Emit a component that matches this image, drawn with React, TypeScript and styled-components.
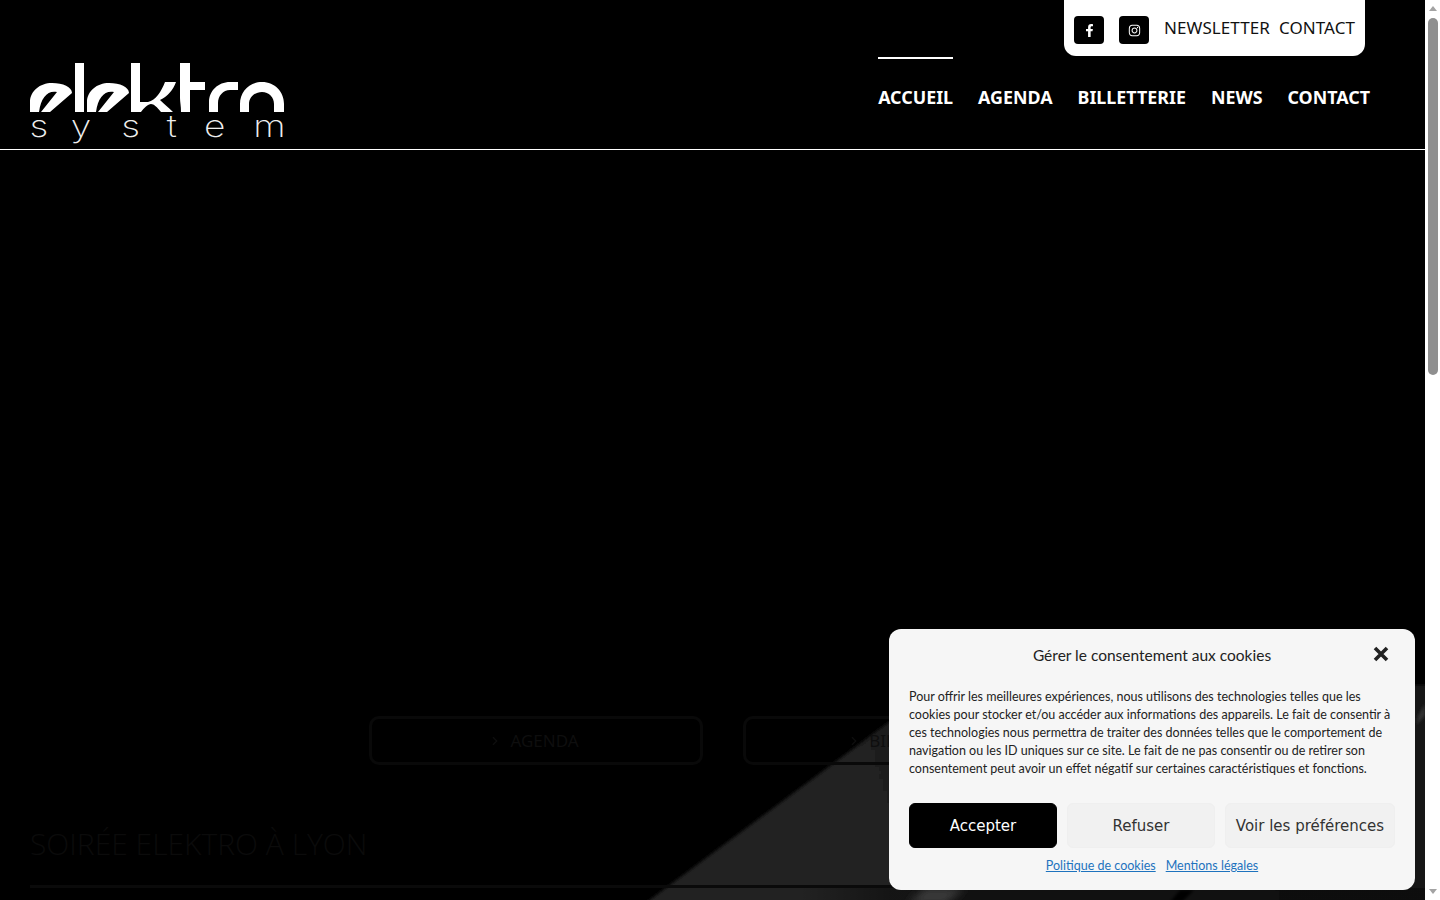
import React from 'react';
import styled, { createGlobalStyle } from 'styled-components';
import { ChevronRight } from 'lucide-react';
import { FaFacebookF, FaInstagram } from 'react-icons/fa';

const GlobalStyle = createGlobalStyle`
  html, body {
    height: 100%;
    overflow: hidden;
  }
  body {
    margin: 0;
    background: #000;
    font-family: "DejaVu Sans", sans-serif;
  }
`;

const Shell = styled.div`
  display: flex;
  height: 100vh;
  overflow: hidden;
`;

const Main = styled.main`
  flex: 1;
  min-width: 0;
  background: #000;
`;

const ScrollRail = styled.div`
  display: flex;
  flex-direction: column;
  align-items: center;
  width: 15px;
  background: #fff;
`;

const ArrowUp = styled.span`
  margin-top: 6px;
  border-left: 4px solid transparent;
  border-right: 4px solid transparent;
  border-bottom: 5px solid #a3a3a3;
`;

const ArrowDown = styled.span`
  margin-top: auto;
  margin-bottom: 6px;
  border-left: 4px solid transparent;
  border-right: 4px solid transparent;
  border-top: 5px solid #a3a3a3;
`;

const ScrollThumb = styled.div`
  width: 10px;
  height: 357px;
  margin-top: 7px;
  border-radius: 5px;
  background: #8f8f8f;
`;

const Header = styled.header`
  height: 149px;
  border-bottom: 1px solid #fff;
  display: flex;
  justify-content: space-between;
  padding: 0 55px 0 30px;
`;

const LogoBox = styled.a`
  display: block;
  width: 256px;
  padding-top: 62px;
`;

const HeaderRight = styled.div`
  display: flex;
  flex-direction: column;
  align-items: flex-end;
`;

const TopCard = styled.div`
  display: flex;
  align-items: center;
  height: 56px;
  margin-right: 5px;
  padding: 0 10px;
  background: #fff;
  border-radius: 0 0 12px 12px;
`;

const Social = styled.a`
  display: flex;
  align-items: center;
  justify-content: center;
  width: 30px;
  height: 28px;
  margin-right: 15px;
  margin-top: 4px;
  border-radius: 4px;
  background: #000;
  color: #fff;
  font-size: 13px;
`;

const TopLinks = styled.div`
  display: flex;
  gap: 9px;
`;

const TopLink = styled.a`
  color: #111;
  font-family: "Noto Sans", sans-serif;
  font-size: 17px;
  letter-spacing: 0.07px;
  line-height: 20px;
`;

const Nav = styled.nav`
  display: flex;
  gap: 25px;
`;

const NavLink = styled.a<{ $active?: boolean }>`
  display: block;
  height: 78px;
  margin-top: 1px;
  padding-top: 26px;
  box-sizing: border-box;
  border-top: 2px solid ${p => (p.$active ? '#fff' : 'transparent')};
  color: #fff;
  font-family: "Noto Sans", sans-serif;
  font-size: 17.85px;
  font-weight: 700;
  line-height: 24px;
`;

const Hero = styled.section`
  position: relative;
  height: 750px;
  padding: 566px 30px 0;
  box-sizing: border-box;
  overflow: hidden;
`;

const Sheen = styled.svg`
  position: absolute;
  top: 0;
  left: 0;
`;

const HeroContent = styled.div`
  position: relative;
`;

const ButtonRow = styled.div`
  display: flex;
  gap: 40px;
  margin-left: 339px;
`;

const GhostButton = styled.a`
  display: flex;
  align-items: center;
  justify-content: center;
  gap: 8px;
  width: 334px;
  height: 49px;
  box-sizing: border-box;
  border: 3px solid #090909;
  border-radius: 10px;
  color: #0e0e0e;
  font-family: "Noto Sans", sans-serif;
  font-size: 17px;
  line-height: 20px;
  padding: 0 5px 0 0;
`;

const Title = styled.h1`
  margin: 60px 0 0;
  padding-bottom: 22px;
  border-bottom: 3px solid #0a0a0a;
  color: #0b0b0b;
  font-family: "Open Sans", sans-serif;
  font-size: 30px;
  font-weight: 300;
  line-height: 38px;
`;

const CookieBanner = styled.div`
  position: fixed;
  right: 25px;
  bottom: 10px;
  width: 526px;
  height: 261px;
  box-sizing: border-box;
  padding: 0 20px;
  border-radius: 12px;
  background: #f6f6f6;
  color: #222;
  font-family: Lato, sans-serif;
`;

const CookieHead = styled.div`
  display: flex;
  align-items: center;
  justify-content: center;
  height: 53px;
  padding-bottom: 2px;
  box-sizing: border-box;
  font-size: 15.5px;
`;

const CloseIcon = styled.svg`
  position: absolute;
  top: 17px;
  right: 26px;
`;

const CookieText = styled.p`
  margin: 6px 0 0;
  font-size: 12.5px;
  line-height: 18px;
`;

const CookieButtons = styled.div`
  display: flex;
  gap: 10px;
  margin-top: 25px;
`;

const CookieButton = styled.button<{ $primary?: boolean; $wide?: boolean }>`
  width: ${p => (p.$wide ? '170px' : '148px')};
  height: 45px;
  padding: 0;
  border: 1px solid ${p => (p.$primary ? '#000' : '#efefef')};
  border-radius: 6px;
  background: ${p => (p.$primary ? '#000' : '#f1f1f1')};
  color: ${p => (p.$primary ? '#fff' : '#333')};
  font-family: "DejaVu Sans", sans-serif;
  font-size: 15px;
`;

const CookieLinks = styled.div`
  display: flex;
  justify-content: center;
  gap: 10px;
  margin-top: 9px;
`;

const CookieLink = styled.a`
  color: #1e73be;
  font-size: 12.5px;
  line-height: 18px;
  text-decoration: underline;
`;

const Logo = () => (
  <svg width="256" height="82" viewBox="30 62 256 82">
    <g fill="#fff">
      <path d="M30 112V102C30 91 40 83 52 83C63 83 72 87 72 93L50 112H41L57 92C48 90 41 97 39 112Z" />
      <rect x="75" y="63" width="9" height="49" />
      <path d="M87 112V102C87 91 97 83 109 83C120 83 129 87 129 93L107 112H98L114 92C105 90 98 97 96 112Z" />
      <path d="M131 63H140V102H148C156 100 161 92 165 82H176C173 90 168 96 160 100C164 104 169 108 173 112H161C157 107 154 104 151 104C148 104 144 108 141 112H131Z" />
      <path d="M180 63H190V82H205V90H190V112H181C181 106 180 102 180 98Z" />
      <path d="M209 112V102C209 91 218 82 230 82H238V90H230C223 90 218 96 218 103V112Z" />
      <path d="M240 112V104C240 92 249 82 262 82C275 82 284 92 284 104V112H274V104C274 97 269 92 262 92C255 92 249 97 249 104V112Z" />
    </g>
    <text
      transform="scale(1.2 1)"
      x="24.5 59 101 139 170 211"
      y="137"
      fill="#eee"
      fontFamily="Inter, sans-serif"
      fontSize="31"
      fontWeight="200"
    >
      system
    </text>
  </svg>
);

export default function App() {
  return (
    <Shell>
      <GlobalStyle />
      <Main>
        <Header>
          <LogoBox>
            <Logo />
          </LogoBox>
          <HeaderRight>
            <TopCard>
              <Social><FaFacebookF /></Social>
              <Social><FaInstagram /></Social>
              <TopLinks>
                <TopLink>NEWSLETTER</TopLink>
                <TopLink>CONTACT</TopLink>
              </TopLinks>
            </TopCard>
            <Nav>
              <NavLink $active>ACCUEIL</NavLink>
              <NavLink>AGENDA</NavLink>
              <NavLink>BILLETTERIE</NavLink>
              <NavLink>NEWS</NavLink>
              <NavLink>CONTACT</NavLink>
            </Nav>
          </HeaderRight>
        </Header>
        <Hero>
          <Sheen width="1425" height="750" viewBox="0 150 1425 750">
            <defs>
              <linearGradient id="sheenFill" x1="650" y1="900" x2="1425" y2="690" gradientUnits="userSpaceOnUse">
                <stop offset="0" stopColor="#242424" />
                <stop offset="0.4" stopColor="#1e1e1e" />
                <stop offset="1" stopColor="#161616" />
              </linearGradient>
              <linearGradient id="sheenFloor" x1="800" y1="0" x2="890" y2="0" gradientUnits="userSpaceOnUse">
                <stop offset="0" stopColor="#000" stopOpacity="0" />
                <stop offset="1" stopColor="#000" stopOpacity="0.4" />
              </linearGradient>
              <filter id="soft" filterUnits="userSpaceOnUse" x="600" y="650" width="860" height="300">
                <feGaussianBlur stdDeviation="1.5" />
              </filter>
              <filter id="softer" filterUnits="userSpaceOnUse" x="850" y="850" width="200" height="80">
                <feGaussianBlur stdDeviation="4" />
              </filter>
            </defs>
            <polygon points="623,920 889,722 1424,685 1460,685 1460,920" fill="url(#sheenFill)" filter="url(#soft)" />
            <rect x="800" y="888" width="625" height="12" fill="url(#sheenFloor)" />
            <polygon points="908,904 925,888 965,888 945,904" fill="#3a3a3a" filter="url(#softer)" />
            <polygon points="1170,902 1180,890 1194,890 1182,902" fill="#000" filter="url(#soft)" />
            <polygon points="1418,716 1425,704 1425,716 1417,724" fill="#333" filter="url(#soft)" />
          </Sheen>
          <HeroContent>
            <ButtonRow>
              <GhostButton><ChevronRight size={14} />AGENDA</GhostButton>
              <GhostButton><ChevronRight size={14} />BILLETTERIE</GhostButton>
            </ButtonRow>
            <Title>SOIRÉE ELEKTRO À LYON</Title>
          </HeroContent>
        </Hero>
      </Main>
      <ScrollRail>
        <ArrowUp />
        <ScrollThumb />
        <ArrowDown />
      </ScrollRail>
      <CookieBanner>
        <CookieHead>Gérer le consentement aux cookies</CookieHead>
        <CloseIcon width="16" height="16" viewBox="0 0 16 16">
          <path d="M2 2L14 14M14 2L2 14" stroke="#222" strokeWidth="3.6" />
        </CloseIcon>
        <CookieText>
          Pour offrir les meilleures expériences, nous utilisons des technologies telles que les cookies pour stocker et/ou accéder aux informations des appareils. Le fait de consentir à ces technologies nous permettra de traiter des données telles que le comportement de navigation ou les ID uniques sur ce site. Le fait de ne pas consentir ou de retirer son consentement peut avoir un effet négatif sur certaines caractéristiques et fonctions.
        </CookieText>
        <CookieButtons>
          <CookieButton $primary>Accepter</CookieButton>
          <CookieButton>Refuser</CookieButton>
          <CookieButton $wide>Voir les préférences</CookieButton>
        </CookieButtons>
        <CookieLinks>
          <CookieLink>Politique de cookies</CookieLink>
          <CookieLink>Mentions légales</CookieLink>
        </CookieLinks>
      </CookieBanner>
    </Shell>
  );
}
